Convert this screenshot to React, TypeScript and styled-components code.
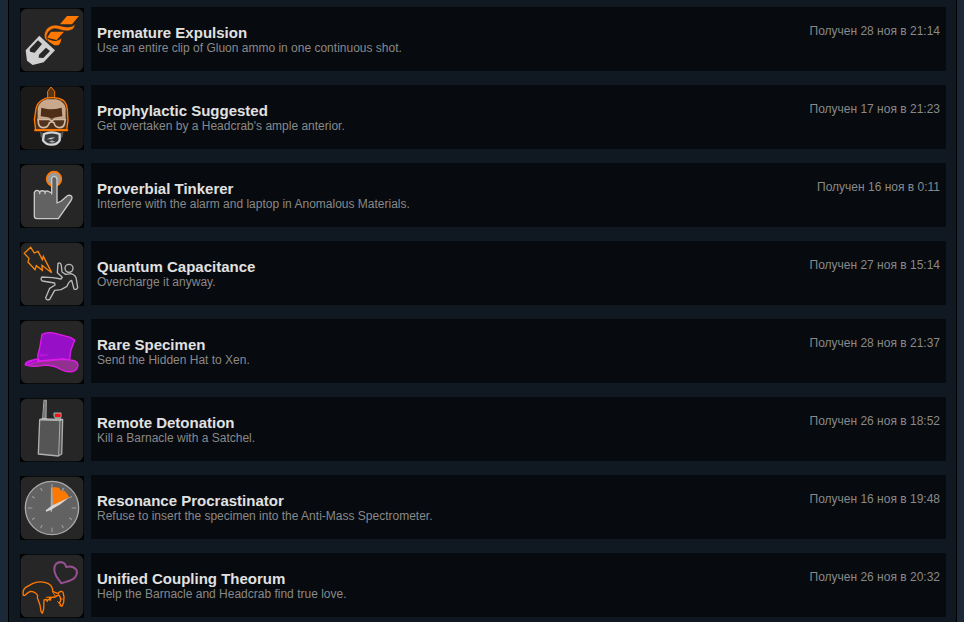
import React from "react";
import styled, { createGlobalStyle } from "styled-components";

const GlobalStyle = createGlobalStyle`
  *, *::before, *::after { box-sizing: border-box; }
  body {
    margin: 0;
    background: #1b2838;
    font-family: "Liberation Sans", Arial, Helvetica, sans-serif;
  }
`;

const Page = styled.main`
  min-height: 100vh;
  margin: 0 7px 0 8px;
  padding: 7px 10px 5px 11px;
  background: #101822;
  border: solid #000;
  border-width: 0 1px;
`;

const List = styled.ul`
  display: flex;
  flex-direction: column;
  gap: 14px;
  margin: 0;
  padding: 0;
  list-style: none;
`;

const Row = styled.li`
  display: flex;
  align-items: flex-start;
  gap: 7px;
  height: 64px;
`;

const Picture = styled.svg`
  flex: none;
  display: block;
  width: 64px;
  height: 64px;
  margin-top: 1px;
`;

const Details = styled.div`
  flex: 1;
  min-width: 0;
  min-height: 64px;
  display: flex;
  justify-content: space-between;
  gap: 16px;
  padding: 16px 6px;
  background: #070a0e;
`;

const Title = styled.h3`
  margin: 0;
  padding-top: 1px;
  color: #e1e1e1;
  font-size: 15px;
  line-height: 17px;
  font-weight: bold;
`;

const Description = styled.p`
  margin: 0;
  color: #898989;
  font-size: 12px;
  line-height: 14px;
`;

const Unlocked = styled.time`
  flex: none;
  color: #898989;
  font-size: 12px;
  line-height: 16px;
`;

function Icon({ left = 24, children }: { left?: number; children: React.ReactNode }) {
  return (
    <Picture viewBox={`${left} 24 192 192`} aria-hidden="true" strokeLinejoin="round" strokeLinecap="round" fill="none">
      <rect x={left} y="24" width="192" height="192" fill="#020303" />
      <rect x={left + 2} y="26" width="188" height="188" rx="19" fill="#262626" />
      {children}
    </Picture>
  );
}

const gluon = (
  <Icon left={60}>
    <path d="M201 48H237L216 73H180Z" fill="#ff7900" />
    <path d="M153 95H192L170 120L141 113Z" fill="#ff7900" />
    <path d="M225 71C226 94 200 97 176 88C158 82 146 91 142 103C139 112 140 118 146 125C133 121 130 108 135 96C142 78 160 72 180 77C202 83 219 82 225 71Z" fill="#ff7900" stroke="#262626" strokeWidth="2" />
    <path d="M141 115C156 125 174 126 184 115C183 126 180 132 175 136H163L146 125Z" fill="#ff7900" />
    <path d="M118 107L165 151L131 187L98 195L81 182L77 151Z" fill="#d0d0d0" />
    <path d="M114 121L126 132L104 158L90 155L89 147Z" fill="#272727" />
    <path d="M138 143L150 153L130 174L116 173L117 164Z" fill="#272727" />
  </Icon>
);

const scientist = (
  <Icon>
    <rect x="26" y="26" width="188" height="188" rx="19" fill="#1b1a19" />
    <path d="M83 160L92 165L94 185L86 176Z" fill="#50534f" />
    <path d="M155 160L144 165L143 185L152 176Z" fill="#50534f" />
    <path d="M107 62V40L117 27L128 40V62Z" fill="#573517" stroke="#ff7900" strokeWidth="3" />
    <path d="M71 156L67 125L72 92Q75 76 90 66Q104 58 119 59Q140 58 155 68Q164 76 166 94L168 128L164 156Z" fill="#4d301a" stroke="#ff7900" strokeWidth="4" />
    <path d="M77 122V90Q83 70 104 64H133Q157 70 161 90V122Z" fill="#c9a88e" />
    <path d="M88 89Q108 94 117 94Q131 94 149 89L151 115L131 118L119 122L108 118L86 115Z" fill="#4e2e19" />
    <path d="M78 124H110L119 128L128 124H160L157 139Q153 149 143 149Q129 149 126 134L119 131L112 134Q108 149 94 149Q83 149 80 139Z" fill="#50321e" stroke="#d3b9a2" strokeWidth="5" />
    <path d="M69 157H166" stroke="#ff7900" strokeWidth="6" />
    <path d="M96 168Q119 158 143 168V187Q134 201 119 200Q103 201 93 187Z" fill="#363839" stroke="#d2d5d5" strokeWidth="7" />
    <path d="M104 184L115 179L130 178L119 184Z" fill="#c8caca" />
    <path d="M111 191L120 187L130 191L121 194Z" fill="#a9aaab" />
  </Icon>
);

const pointer = (
  <Icon>
    <circle cx="126" cy="69" r="22" fill="#999" stroke="#ff7900" strokeWidth="5" />
    <path d="M67 181V109Q71 101 79 104L83 108Q90 101 99 107Q106 102 114 109H119V68Q120 61 127 61Q134 62 135 70V141L148 135L166 119Q176 115 180 123Q181 128 176 135L139 188H74Q67 188 67 181Z" fill="#626262" stroke="#c9c9c9" strokeWidth="4" />
    <path d="M83 106V113M99 106V113M119 108V114" stroke="#c9c9c9" strokeWidth="4" />
  </Icon>
);

const shock = (
  <Icon>
    <path d="M56 40L37 58L51 73L48 84L69 107L73 95L91 109L90 94L119 116L94 67L91 77L78 52L67 57Z" stroke="#f98509" strokeWidth="4" strokeLinejoin="miter" />
    <g stroke="#b9b9b9" strokeWidth="4">
      <circle cx="171" cy="103" r="12" />
      <path d="M138 88Q146 84 148 95L150 114L161 121L177 119Q191 123 193 135L197 161Q193 169 186 165L179 139Q170 142 165 157L147 167L128 169L113 196Q103 201 101 191L113 163L129 153L128 147L91 141Q84 136 90 129L122 131L147 135L151 130L136 116Z" />
    </g>
  </Icon>
);

const hat = (
  <Icon>
    <path d="M90 67Q107 58 133 65L175 76L188 84L176 117L173 144L153 141L80 147L77 130L83 108Z" fill="#9710c8" stroke="#e01be8" strokeWidth="4" />
    <path d="M40 159Q38 151 54 146L76 141L77 149L154 142L173 144Q196 145 198 158Q198 174 181 179Q160 181 143 171Q124 158 94 160Q59 167 40 159Z" fill="#923090" stroke="#e01be8" strokeWidth="4" />
    <path d="M45 154L76 141L76 149L45 160Z" fill="#9b08d0" stroke="#df17eb" strokeWidth="3" />
    <path d="M80 128L107 129M84 132L98 131" stroke="#d01be5" strokeWidth="2" />
    <path d="M178 106L171 143" stroke="#c21ce0" strokeWidth="3" />
  </Icon>
);

const radio = (
  <Icon>
    <path d="M97 31H103L102 87H93Z" fill="#777" stroke="#aaa" strokeWidth="3" />
    <path d="M127 69H147V80L144 88H133L127 80Z" fill="#8e9292" stroke="#afb2b2" strokeWidth="3" />
    <rect x="129" y="71" width="17" height="10" fill="#ff1010" />
    <path d="M83 89L89 87L152 88L149 192L139 198L79 192Z" fill="#555" stroke="#aeb0b0" strokeWidth="4" />
    <path d="M84 90L144 92L140 196" stroke="#aeb0b0" strokeWidth="3" />
    <path d="M144 92L151 89M92 86H104" stroke="#c4c4c4" strokeWidth="3" />
  </Icon>
);

const clock = (
  <Icon>
    <circle cx="120" cy="120" r="80" fill="#626262" stroke="#aaa" strokeWidth="4" />
    <g stroke="#a0a0a0" strokeWidth="3" strokeLinecap="butt">
      {Array.from({ length: 12 }, (_, i) => (
        <path key={i} d={i % 3 ? "M120 51V61" : "M120 47V61"} transform={`rotate(${i * 30} 120 120)`} />
      ))}
    </g>
    <path d="M122 119L120 62L125 57L141 59L147 68L159 70L172 87L135 109Z" fill="#ff7900" />
    <path d="M117 57L121 60L123 116L119 133L115 130L116 115Z" fill="#aaa" />
    <path d="M101 127L118 114L174 87L145 109L116 126L103 131Z" fill="#d6d6d6" />
    <path d="M155 63L150 70" stroke="#a59b92" strokeWidth="3" />
  </Icon>
);

const coupling = (
  <Icon left={60}>
    <path d="M184 112L169 91Q158 70 167 55Q180 43 194 53L199 63Q217 58 229 71Q235 85 221 98Q210 105 184 112Z" stroke="#965092" strokeWidth="6" />
    <path d="M75 148L70 148Q67 133 76 125Q88 118 99 112Q125 103 145 113Q158 120 158 136L174 143Q182 132 189 139Q194 152 191 169L186 181L180 178L182 175L177 171L182 165L181 153L176 147L166 153L148 155L152 162L144 160L142 166L138 160L132 162L131 190L127 202L123 196L120 177L112 155L113 148Q105 136 91 136L80 143Z" stroke="#ff7900" strokeWidth="4" />
    <path d="M139 154L152 153L148 159L162 153M158 138L166 150L176 147M177 171L173 167M182 159H187" stroke="#ff7900" strokeWidth="3" />
  </Icon>
);

const achievements = [
  { title: "Premature Expulsion", description: "Use an entire clip of Gluon ammo in one continuous shot.", unlocked: "28 ноя в 21:14", icon: gluon },
  { title: "Prophylactic Suggested", description: "Get overtaken by a Headcrab's ample anterior.", unlocked: "17 ноя в 21:23", icon: scientist },
  { title: "Proverbial Tinkerer", description: "Interfere with the alarm and laptop in Anomalous Materials.", unlocked: "16 ноя в 0:11", icon: pointer },
  { title: "Quantum Capacitance", description: "Overcharge it anyway.", unlocked: "27 ноя в 15:14", icon: shock },
  { title: "Rare Specimen", description: "Send the Hidden Hat to Xen.", unlocked: "28 ноя в 21:37", icon: hat },
  { title: "Remote Detonation", description: "Kill a Barnacle with a Satchel.", unlocked: "26 ноя в 18:52", icon: radio },
  { title: "Resonance Procrastinator", description: "Refuse to insert the specimen into the Anti-Mass Spectrometer.", unlocked: "16 ноя в 19:48", icon: clock },
  { title: "Unified Coupling Theorum", description: "Help the Barnacle and Headcrab find true love.", unlocked: "26 ноя в 20:32", icon: coupling },
];

export default function App() {
  return (
    <>
      <GlobalStyle />
      <Page>
        <List>
          {achievements.map((item) => (
            <Row key={item.title}>
              {item.icon}
              <Details>
                <div>
                  <Title>{item.title}</Title>
                  <Description>{item.description}</Description>
                </div>
                <Unlocked>Получен {item.unlocked}</Unlocked>
              </Details>
            </Row>
          ))}
        </List>
      </Page>
    </>
  );
}
